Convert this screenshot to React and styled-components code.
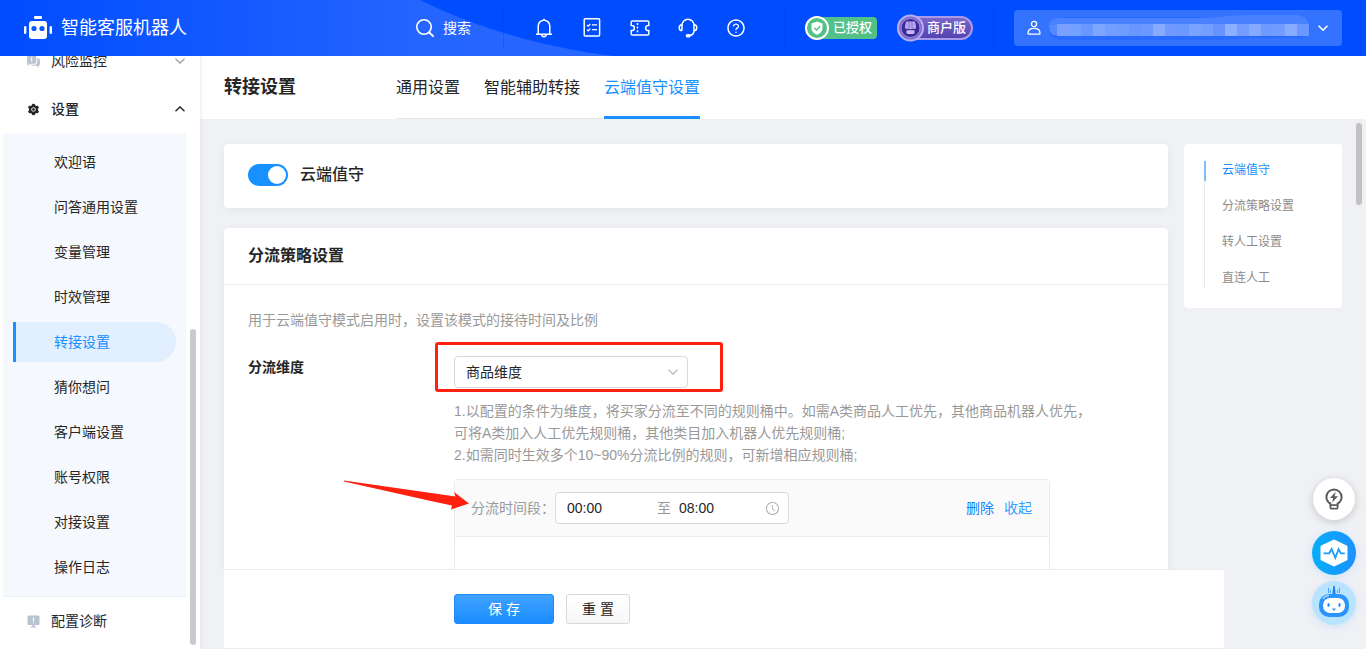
import { useState } from "react";
import styled, { createGlobalStyle } from "styled-components";
import {
  AiFillSetting,
  AiOutlineClockCircle,
  AiOutlineQuestionCircle,
} from "react-icons/ai";

const GlobalStyle = createGlobalStyle`
  * {
    box-sizing: border-box;
  }
  body {
    margin: 0;
    font-family: "Liberation Sans", "Noto Sans CJK SC", sans-serif;
    font-size: 14px;
    line-height: 22px;
    color: #262626;
  }
  button, input, select {
    font: inherit;
    color: inherit;
  }
  a {
    text-decoration: none;
  }
`;

const Page = styled.div`
  display: flex;
  flex-direction: column;
  height: 100vh;
  overflow: hidden;
  background: #f0f1f5;
`;

/* ---------- header ---------- */

const Header = styled.header`
  position: relative;
  display: flex;
  flex: none;
  align-items: center;
  justify-content: space-between;
  height: 56px;
  padding: 0 24px;
  background: #004cff;
  color: #fff;
`;
const HeaderWave = styled.svg`
  position: absolute;
  left: 0;
  top: 0;
`;
const Brand = styled.div`
  position: relative;
  display: flex;
  align-items: center;
  gap: 9px;
  font-size: 18px;
`;
const HeaderTools = styled.div`
  position: relative;
  display: flex;
  align-items: center;
  gap: 20px;
`;
const SearchButton = styled.button`
  display: flex;
  align-items: center;
  gap: 8px;
  margin-right: 12px;
  padding: 0;
  border: 0;
  background: none;
  cursor: pointer;
`;
const Divider = styled.span`
  width: 1px;
  height: 40px;
  background: rgba(0, 50, 200, 0.2);
`;
const IconBar = styled.div`
  display: flex;
  gap: 24px;
  padding: 0 16px 0 8px;
`;
const IconButton = styled.button`
  display: flex;
  align-items: center;
  justify-content: center;
  width: 24px;
  height: 24px;
  padding: 0;
  border: 0;
  background: none;
  cursor: pointer;
`;
const AuthBadge = styled.div`
  display: flex;
  align-items: center;
  gap: 4px;
  width: 72px;
  height: 22px;
  border-radius: 12px 4px 4px 12px;
  background: #52c087;
  font-size: 13px;
  font-weight: 500;
  white-space: nowrap;
`;
const VersionBadge = styled(AuthBadge)`
  gap: 3px;
  width: 76px;
  height: 24px;
  border: 2px solid #a99be8;
  border-left: 0;
  border-radius: 12px;
  background: linear-gradient(#7a66c8, #5443b0);
`;
const BadgeIcon = styled.svg`
  flex: none;
`;
const UserBox = styled.button`
  display: flex;
  align-items: center;
  justify-content: space-between;
  width: 328px;
  height: 36px;
  padding: 0 14px 0 13px;
  border: 0;
  border-radius: 4px;
  background: #3373ff;
  cursor: pointer;
`;

/* ---------- sidebar ---------- */

const Body = styled.div`
  display: flex;
  flex: 1;
  min-height: 0;
`;
const Sidebar = styled.aside`
  position: relative;
  display: flex;
  flex: none;
  width: 200px;
  overflow: hidden;
  background: #fff;
`;
const Menu = styled.nav`
  display: flex;
  flex: 1;
  flex-direction: column;
  justify-content: flex-end;
  padding-bottom: 4px;
`;
const MenuRow = styled.a`
  display: flex;
  flex: none;
  align-items: center;
  gap: 11px;
  height: 48px;
  padding-left: 27px;
  color: #262626;
  font-weight: ${(props) => (props.$open ? 500 : 400)};
`;
const MenuArrow = styled.span`
  display: flex;
  margin-left: auto;
  padding-right: 1px;
  color: ${(props) => (props.$open ? "#262626" : "#a6a6a6")};
`;
const SubMenu = styled.div`
  display: flex;
  flex: none;
  flex-direction: column;
  gap: 5px;
  margin-left: 3px;
  padding: 9px 10px;
  border-bottom: 1px solid #e6eff8;
  background: #f5f9fd;
`;
const SubItem = styled.a`
  height: 40px;
  padding-left: 38px;
  border-left: 3px solid ${(props) => (props.$active ? "#1890ff" : "transparent")};
  border-radius: 0 20px 20px 0;
  background: ${(props) => (props.$active ? "#e1efff" : "none")};
  background-clip: padding-box;
  color: ${(props) => (props.$active ? "#1890ff" : "#262626")};
  line-height: 40px;
`;
const ScrollTrack = styled.div`
  display: flex;
  flex: none;
  align-items: ${(props) => props.$at};
  padding: 4px;
`;
const ScrollThumb = styled.div`
  width: 6px;
  height: ${(props) => props.$size};
  border-radius: 3px;
  background: ${(props) => props.$color};
`;

/* ---------- main ---------- */

const Main = styled.main`
  display: flex;
  flex: 1;
  flex-direction: column;
  min-width: 0;
  box-shadow: inset 6px 0 6px -6px rgba(0, 0, 0, 0.08);
`;
const TitleBar = styled.div`
  display: flex;
  flex: none;
  gap: 100px;
  height: 63px;
  padding-left: 24px;
  background: #fff;
  box-shadow: inset 4px 0 4px -4px rgba(0, 0, 0, 0.12);
`;
const PageTitle = styled.h1`
  margin: 0;
  font-size: 18px;
  font-weight: 700;
  line-height: 63px;
`;
const Tabs = styled.nav`
  display: flex;
  gap: 24px;
  box-shadow: inset 0 -1px #e8e8e8;
`;
const Tab = styled.a`
  padding-top: 4px;
  border-bottom: 3px solid ${(props) => (props.$active ? "#1890ff" : "transparent")};
  color: ${(props) => (props.$active ? "#1890ff" : "#262626")};
  font-size: 16px;
  line-height: 56px;
`;
const ScrollArea = styled.div`
  display: flex;
  flex: 1;
  min-height: 0;
  overflow: hidden;
`;
const Content = styled.div`
  display: flex;
  flex: 1;
  align-items: flex-start;
  gap: 16px;
  min-width: 0;
  padding: 25px 10px 0 24px;
`;
const Cards = styled.div`
  display: flex;
  flex: 1;
  flex-direction: column;
  gap: 20px;
  min-width: 0;
`;
const Card = styled.section`
  border-radius: 4px;
  background: #fff;
  box-shadow: 0 2px 8px rgba(0, 0, 0, 0.05);
`;
const SwitchLabel = styled.label`
  display: flex;
  align-items: center;
  gap: 12px;
  height: 64px;
  padding: 0 24px 2px;
  font-size: 16px;
  font-weight: 500;
`;
const Switch = styled.input`
  display: flex;
  justify-content: ${(props) => (props.checked ? "flex-end" : "flex-start")};
  width: 40px;
  height: 22px;
  margin: 0;
  padding: 2px;
  border-radius: 11px;
  appearance: none;
  background: ${(props) => (props.checked ? "#1890ff" : "#bfbfbf")};
  cursor: pointer;
  &::before {
    content: "";
    width: 18px;
    height: 18px;
    border-radius: 50%;
    background: #fff;
  }
`;
const CardTitle = styled.h2`
  margin: 0;
  padding: 0 24px;
  border-bottom: 1px solid #ebebeb;
  font-size: 16px;
  font-weight: 700;
  line-height: 56px;
`;
const CardBody = styled.div`
  padding: 24px;
`;
const Hint = styled.p`
  margin: 0;
  color: #999;
`;
const FormRow = styled.div`
  display: flex;
  align-items: flex-start;
  padding-top: 25px;
`;
const FormLabel = styled.label`
  flex: none;
  width: 206px;
  font-weight: 700;
`;
const FormField = styled.div`
  flex: 1;
  max-width: 640px;
`;
const SelectWrap = styled.div`
  position: relative;
  display: flex;
  align-items: center;
  width: 234px;
  color: #bfbfbf;
`;
const Select = styled.select`
  width: 100%;
  height: 32px;
  padding: 0 11px;
  border: 1px solid #d9d9d9;
  border-radius: 4px;
  appearance: none;
  background: #fff;
  color: #262626;
`;
const SelectArrow = styled.span`
  position: absolute;
  right: 10px;
  display: flex;
  pointer-events: none;
`;
const Highlight = styled.div`
  position: absolute;
  left: -19px;
  top: -14px;
  width: 288px;
  height: 50px;
  border: 3px solid #ff2010;
  border-radius: 3px;
  pointer-events: none;
`;
const FieldHelp = styled(Hint)`
  padding: 12px 0 13px;
`;
const RuleBox = styled.div`
  position: relative;
  width: 596px;
  max-width: 100%;
  height: 240px;
  border: 1px solid #ebebeb;
  border-radius: 4px;
`;
const RuleHead = styled.div`
  display: flex;
  align-items: center;
  height: 57px;
  padding: 0 17px 0 16px;
  border-bottom: 1px solid #ebebeb;
  background: #fafafa;
  color: #999;
`;
const TimeLabel = styled.label`
  width: 84px;
`;
const TimeRange = styled.div`
  display: flex;
  align-items: center;
  width: 234px;
  height: 32px;
  padding: 0 9px 0 11px;
  border: 1px solid #d9d9d9;
  border-radius: 4px;
  background: #fff;
`;
const TimeInput = styled.input`
  width: 86px;
  padding: 0;
  border: 0;
  background: none;
  color: #262626;
`;
const TimeTo = styled.span`
  flex: none;
  margin: 0 8px 0 4px;
`;
const ClockIcon = styled(AiOutlineClockCircle)`
  flex: none;
  color: #b3b3b3;
`;
const RuleActions = styled.div`
  display: flex;
  gap: 10px;
  margin-left: auto;
`;
const TextButton = styled.button`
  padding: 0;
  border: 0;
  background: none;
  color: ${(props) => props.$color};
  cursor: pointer;
`;
const Arrow = styled.svg`
  position: absolute;
  left: -112px;
  top: -4px;
  pointer-events: none;
`;
const Anchors = styled.nav`
  flex: none;
  width: 158px;
  padding: 17px 20px 19px;
  border-radius: 4px;
  background: #fff;
`;
const AnchorList = styled.div`
  display: flex;
  flex-direction: column;
  gap: 16px;
  box-shadow: inset 1px 0 #e8e8e8;
`;
const Anchor = styled.a`
  padding: 0 0 2px 16px;
  border-left: 2px solid ${(props) => (props.$active ? "#7dbbfb" : "transparent")};
  color: ${(props) => (props.$active ? "#1890ff" : "#8c8c8c")};
  font-size: 12px;
  line-height: 18px;
`;
const Footer = styled.footer`
  display: flex;
  flex: none;
  gap: 12px;
  margin: 0 142px 0 24px;
  padding: 24px 0 24px 230px;
  border: solid #ebebeb;
  border-width: 1px 0;
  background: #fff;
`;
const Button = styled.button`
  height: 30px;
  padding: 0;
  width: ${(props) => (props.$primary ? "100px" : "64px")};
  border: 1px solid ${(props) => (props.$primary ? "#1a8cff" : "#d9d9d9")};
  border-radius: 3px;
  background: ${(props) =>
    props.$primary ? "linear-gradient(#40a3ff, #1a8cff)" : "linear-gradient(#fff, #f7f7f7)"};
  color: ${(props) => (props.$primary ? "#fff" : "#262626")};
  line-height: 28px;
  cursor: pointer;
`;

/* ---------- floating buttons ---------- */

const FloatBar = styled.div`
  position: fixed;
  right: 10px;
  bottom: 24px;
  display: flex;
  flex-direction: column;
  align-items: center;
  gap: 6px;
`;
const FloatButton = styled.button`
  display: flex;
  align-items: center;
  justify-content: center;
  width: 44px;
  height: 44px;
  padding: 0;
  border: 0;
  border-radius: 50%;
  background: ${(props) => props.$bg};
  box-shadow: 0 2px 8px ${(props) => props.$shadow};
  cursor: pointer;
`;
const TipButton = styled(FloatButton)`
  width: 42px;
  height: 42px;
  margin-bottom: 5px;
`;

const subItems = [
  "欢迎语",
  "问答通用设置",
  "变量管理",
  "时效管理",
  "转接设置",
  "猜你想问",
  "客户端设置",
  "账号权限",
  "对接设置",
  "操作日志",
];
const tabs = ["通用设置", "智能辅助转接", "云端值守设置"];
const anchors = ["云端值守", "分流策略设置", "转人工设置", "直连人工"];
const maskColors = [
  "#7aa0ff", "#74a0ff", "#6897ff", "#7ea5ff", "#739eff", "#6f9dff", "#6896ff",
  "#6d98ff", "#88abff", "#709aff", "#6a99ff", "#7aa3ff", "#759fff", "#6893ff",
  "#8cb0ff", "#749dff", "#84a9ff", "#6f9bff", "#729cff", "#86abff", "#6b98ff",
];

const Chevron = ({ up, width = 1.4 }) => (
  <svg width="10" height="6" viewBox="0 0 10 6" fill="none" stroke="currentColor" strokeWidth={width}>
    <path d={up ? "M0.500 5.300L5 0.900l4.500 4.400" : "M0.500 0.700L5 5.100l4.500-4.400"} />
  </svg>
);

const LogoIcon = () => (
  <svg width="28" height="24" viewBox="0 0 28 24" fill="#fff">
    <rect x="10" y="0" width="8" height="3" rx="1" />
    <rect x="5" y="5" width="18" height="18" rx="3" />
    <rect x="0" y="10" width="2.4" height="8" rx="1.2" />
    <rect x="25.6" y="10" width="2.4" height="8" rx="1.2" />
    <circle cx="10" cy="12.5" r="2.6" fill="#0c55ff" />
    <circle cx="18" cy="12.5" r="2.6" fill="#0c55ff" />
  </svg>
);

const SearchIcon = () => (
  <svg width="19" height="20" viewBox="0 0 19 20" fill="none" stroke="#fff" strokeWidth="1.6">
    <circle cx="8" cy="9" r="7.2" />
    <path d="M13 14.2L17.6 18.6" strokeWidth="2" />
  </svg>
);

const BellIcon = () => (
  <svg width="18" height="20" viewBox="0 0 18 20" fill="none" stroke="#fff" strokeWidth="1.5">
    <path d="M3.200 16V8a5.800 5.800 0 0 1 11.600 0v8" />
    <path d="M1 16.200h16M9 .8v1.600" />
    <path d="M6.800 17a2.200 1.700 0 0 0 4.400 0" />
  </svg>
);

const ListIcon = () => (
  <svg width="18" height="20" viewBox="0 0 18 20" fill="none" stroke="#fff" strokeWidth="1.5">
    <rect x="1.2" y="0.8" width="15.4" height="17.2" rx="1" />
    <path d="M4 7l1.2 1.2L7.4 6M4 11.600l1.2 1.2 2.2-2.2M9 6.800h5M9 11.600h5" strokeWidth="1.3" />
  </svg>
);

const TicketIcon = () => (
  <svg width="20" height="16" viewBox="0 0 20 16" fill="none" stroke="#fff" strokeWidth="1.5">
    <path d="M2.200 1h15.600q1 0 1 1v3.400h-.6a2.600 2.600 0 0 0 0 5.200h.6V14q0 1-1 1H2.200q-1 0-1-1v-3.400h.6a2.600 2.600 0 0 0 0-5.200h-.6V2q0-1 1-1z" />
    <path d="M7.500 3v10" strokeDasharray="2 1.6" />
  </svg>
);

const HeadsetIcon = () => (
  <svg width="20" height="20" viewBox="0 0 20 20" fill="none" stroke="#fff" strokeWidth="1.5">
    <path d="M4 12.6V7.4a6 6.2 0 0 1 12 0v5.2c0 3-1.800 4.600-4.600 5.200" />
    <path d="M4 6.800C2 6.800 1.200 8 1.200 9.700S2 12.600 4 12.600M16 6.800c2 0 2.800 1.200 2.800 2.900s-.8 2.900-2.800 2.900" />
    <rect x="8.400" y="16.800" width="3.600" height="2" rx="1" fill="#fff" />
  </svg>
);

const UserIcon = () => (
  <svg width="14" height="16" viewBox="0 0 14 16" fill="none" stroke="#fff" strokeWidth="1.3">
    <circle cx="7" cy="4" r="2.600" />
    <path d="M1 13.200c0-3 2.600-4.800 6-4.800s6 1.800 6 4.800c0 .7-.4 1-1 1H2c-.6 0-1-.3-1-1z" />
  </svg>
);

const MaskedName = () => (
  <svg width="262" height="26" viewBox="0 0 262 26">
    <path d="M11 2h180q20-1 30-2h28q12 2 12 12 0 10-10 11h-50q-20 1-30 2H11Q0 24 0 14 0 3 11 2z" fill="#286aff" />
    <path d="M0 10C2 4 6 2 12 3H150C170 3 180 0 200 0h48q10 1 12 8v4H0z" fill="#4a81ff" />
    <path d="M0 10h8v10H5Q0 18 0 10z" fill="#5589ff" />
    {maskColors.map((color, i) => (
      <rect key={i} x={8 + i * 12} y="9" width="12" height="12" fill={color} />
    ))}
  </svg>
);

const ShieldIcon = () => (
  <BadgeIcon width="24" height="24" viewBox="0 0 24 24">
    <circle cx="12" cy="12" r="11" fill="#52c087" stroke="#fff" strokeWidth="2" />
    <path d="M12 5.500l5.500 2v4.800c0 3.200-2.300 5.300-5.500 6.500-3.200-1.200-5.500-3.300-5.500-6.500V7.500z" fill="#fff" />
    <path d="M9.300 11.800l2.200 2.200 3.600-3.700" fill="none" stroke="#52c087" strokeWidth="1.500" />
  </BadgeIcon>
);

const ShopIcon = () => (
  <BadgeIcon width="27" height="28" viewBox="0 0 27 28">
    <circle cx="13.500" cy="14" r="12.500" fill="#7f6cd2" stroke="#b9adf0" strokeWidth="2" />
    <circle cx="13.500" cy="14" r="9.500" fill="#3d2a96" stroke="#9c8be2" />
    <path d="M9 7.500h9l1.200 5.500q0 2-1.700 2-1 0-1.500-.6-.9.8-2.500.8t-2.500-.8q-.5.600-1.500.6-1.700 0-1.700-2z" fill="#b5a4f0" />
    <path d="M9.500 16.200h8V18.500q0 1.500-1.500 1.500H11q-1.500 0-1.500-1.500z" fill="#c9bcf8" />
    <path d="M12 7.500v6.500M15 7.500v6.500" stroke="#8470d0" strokeWidth="0.800" />
  </BadgeIcon>
);

const ChatIcon = () => (
  <svg width="13" height="14" viewBox="0 0 14 14" fill="#bcc5d1">
    <path d="M2 0h6q2 0 2 2v6q0 2-2 2H4l-3 2-1-3V2q0-2 2-2z" />
    <path d="M11 4q3 0 3 2v4q0 1.500-1.500 2l.2 2-2.700-1.800H6q-1.500 0-2-1.200h4q3 0 3-3z" />
    <path d="M5 2.500v5" stroke="#fff" strokeWidth="1" />
  </svg>
);

const MonitorIcon = () => (
  <svg width="13" height="13" viewBox="0 0 13 13" fill="#b8c3d0">
    <rect x="0.500" y="0.500" width="12" height="9.500" rx="1.500" />
    <path d="M5.500 10h2v1.500h2V12.500h-6V11.500h2z" />
    <path d="M6.500 2.500v3.500M6.500 7v1.300" stroke="#fff" strokeWidth="1.300" />
  </svg>
);

const BulbIcon = () => (
  <svg width="18" height="22" viewBox="0 0 18 22" fill="none" stroke="#5c5c5c" strokeWidth="2">
    <path d="M5.400 15.800C3 14.300 1.400 12 1.400 9a7.600 7.600 0 0 1 15.200 0c0 3-1.600 5.300-4 6.800" />
    <path d="M5.400 14.500v5.300q0 .8.8.8h5.600q.8 0 .8-.8v-5.300M5.400 17.200h7.200" strokeWidth="1.800" />
    <path d="M10.800 3.800L5 10h3.200L7.200 14.500l5.800-6.300H9.600z" fill="#5c5c5c" stroke="none" />
  </svg>
);

const PulseIcon = () => (
  <svg width="28" height="28" viewBox="0 0 28 28">
    <path d="M14 2l12 5.800v12.400L14 26 2 20.200V7.800z" fill="#fff" stroke="#fff" strokeWidth="3" strokeLinejoin="round" />
    <path d="M3.500 14.300h5.700l2.500-4.200 3.600 8.700 3.300-8.700 2.200 4.200h4" fill="none" stroke="#1c9cfb" strokeWidth="1.800" />
  </svg>
);

const RobotIcon = () => (
  <svg width="32" height="36" viewBox="0 0 32 36">
    <path d="M10.500 3v5M12.500 5v3M19.500 5v3M21.500 3v5" stroke="#4aa5f8" strokeWidth="1" />
    <path d="M15.200 1h1.600l.8 8h-3.200z" fill="#1d86f5" />
    <rect x="1" y="9" width="30" height="23" rx="10" fill="#2b93fa" />
    <path d="M5 14q2-3.500 6-3.500" stroke="#a9dbff" strokeWidth="1.500" fill="none" />
    <rect x="5" y="13" width="22" height="15" rx="7" fill="#fff" />
    <ellipse cx="10.500" cy="20" rx="1.100" ry="2" fill="#1987f5" />
    <ellipse cx="21.500" cy="20" rx="1.100" ry="2" fill="#1987f5" />
    <path d="M14 23.500h4l-2 2.500z" fill="#2b93fa" />
  </svg>
);

const TopBar = () => (
  <Header>
    <HeaderWave width="616" height="56" viewBox="0 0 616 56">
      <defs>
        <linearGradient id="wave" x1="0" x2="1">
          <stop offset="0" stopColor="#004cff" />
          <stop offset="0.7" stopColor="#2565ff" />
          <stop offset="1" stopColor="#2868ff" />
        </linearGradient>
      </defs>
      <path d="M0 0H420C472 26 540 47 614 56H0z" fill="url(#wave)" />
    </HeaderWave>
    <Brand>
      <LogoIcon />
      智能客服机器人
    </Brand>
    <HeaderTools>
      <SearchButton>
        <SearchIcon />
        搜索
      </SearchButton>
      <Divider />
      <IconBar>
        <IconButton aria-label="通知"><BellIcon /></IconButton>
        <IconButton aria-label="任务"><ListIcon /></IconButton>
        <IconButton aria-label="卡券"><TicketIcon /></IconButton>
        <IconButton aria-label="客服"><HeadsetIcon /></IconButton>
        <IconButton aria-label="帮助"><AiOutlineQuestionCircle size={20} /></IconButton>
      </IconBar>
      <Divider />
      <AuthBadge>
        <ShieldIcon />
        已授权
      </AuthBadge>
      <VersionBadge>
        <ShopIcon />
        商户版
      </VersionBadge>
      <Divider />
      <UserBox aria-label="账号">
        <UserIcon />
        <MaskedName />
        <Chevron width={1.6} />
      </UserBox>
    </HeaderTools>
  </Header>
);

const SideMenu = () => (
  <Sidebar>
    <Menu>
      <MenuRow href="#">
        <ChatIcon />
        风险监控
        <MenuArrow><Chevron /></MenuArrow>
      </MenuRow>
      <MenuRow href="#" $open>
        <AiFillSetting size={13} />
        设置
        <MenuArrow $open><Chevron up /></MenuArrow>
      </MenuRow>
      <SubMenu>
        {subItems.map((name) => (
          <SubItem key={name} href="#" $active={name === "转接设置"}>
            {name}
          </SubItem>
        ))}
      </SubMenu>
      <MenuRow href="#">
        <MonitorIcon />
        配置诊断
      </MenuRow>
    </Menu>
    <ScrollTrack $at="flex-end">
      <ScrollThumb $size="54%" $color="#c9c9c9" />
    </ScrollTrack>
  </Sidebar>
);

const App = () => {
  const [enabled, setEnabled] = useState(true);
  const [start, setStart] = useState("00:00");
  const [end, setEnd] = useState("08:00");

  return (
    <Page>
      <GlobalStyle />
      <TopBar />
      <Body>
        <SideMenu />
        <Main>
          <TitleBar>
            <PageTitle>转接设置</PageTitle>
            <Tabs>
              {tabs.map((name) => (
                <Tab key={name} href="#" $active={name === "云端值守设置"}>
                  {name}
                </Tab>
              ))}
            </Tabs>
          </TitleBar>
          <ScrollArea>
            <Content>
              <Cards>
                <Card>
                  <SwitchLabel>
                    <Switch
                      type="checkbox"
                      checked={enabled}
                      onChange={(e) => setEnabled(e.target.checked)}
                    />
                    云端值守
                  </SwitchLabel>
                </Card>
                <Card>
                  <CardTitle>分流策略设置</CardTitle>
                  <CardBody>
                    <Hint>用于云端值守模式启用时，设置该模式的接待时间及比例</Hint>
                    <FormRow>
                      <FormLabel htmlFor="dimension">分流维度</FormLabel>
                      <FormField>
                        <SelectWrap>
                          <Select id="dimension">
                            <option>商品维度</option>
                          </Select>
                          <SelectArrow><Chevron /></SelectArrow>
                          <Highlight />
                        </SelectWrap>
                        <FieldHelp>
                          1.以配置的条件为维度，将买家分流至不同的规则桶中。如需A类商品人工优先，其他商品机器人优先，
                          <br />
                          可将A类加入人工优先规则桶，其他类目加入机器人优先规则桶;
                          <br />
                          2.如需同时生效多个10~90%分流比例的规则，可新增相应规则桶;
                        </FieldHelp>
                        <RuleBox>
                          <RuleHead>
                            <TimeLabel htmlFor="start">分流时间段：</TimeLabel>
                            <TimeRange>
                              <TimeInput id="start" value={start} onChange={(e) => setStart(e.target.value)} />
                              <TimeTo>至</TimeTo>
                              <TimeInput aria-label="结束时间" value={end} onChange={(e) => setEnd(e.target.value)} />
                              <ClockIcon size={15} />
                            </TimeRange>
                            <RuleActions>
                              <TextButton $color="#1082ff">删除</TextButton>
                              <TextButton $color="#369fff">收起</TextButton>
                            </RuleActions>
                          </RuleHead>
                          <Arrow width="128" height="36" viewBox="0 0 128 36">
                            <path d="M1 4.500L112.500 20.500 111 16 126 27.500 108 33.500 109 29.500 90 25.500 1 5.500z" fill="#ff2010" />
                          </Arrow>
                        </RuleBox>
                      </FormField>
                    </FormRow>
                  </CardBody>
                </Card>
              </Cards>
              <Anchors>
                <AnchorList>
                  {anchors.map((name, i) => (
                    <Anchor key={name} href="#" $active={i === 0}>
                      {name}
                    </Anchor>
                  ))}
                </AnchorList>
              </Anchors>
            </Content>
            <ScrollTrack $at="flex-start">
              <ScrollThumb $size="82px" $color="#c1c1c4" />
            </ScrollTrack>
          </ScrollArea>
          <Footer>
            <Button $primary>保 存</Button>
            <Button>重 置</Button>
          </Footer>
        </Main>
      </Body>
      <FloatBar>
        <TipButton aria-label="提示" $bg="#fff" $shadow="rgba(0, 0, 0, 0.18)"><BulbIcon /></TipButton>
        <FloatButton aria-label="诊断" $bg="linear-gradient(90deg, #06aef8, #1e90ff)" $shadow="rgba(30, 144, 255, 0.15)">
          <PulseIcon />
        </FloatButton>
        <FloatButton aria-label="助手" $bg="#b9e4ff" $shadow="rgba(30, 144, 255, 0.15)"><RobotIcon /></FloatButton>
      </FloatBar>
    </Page>
  );
};

export default App;
